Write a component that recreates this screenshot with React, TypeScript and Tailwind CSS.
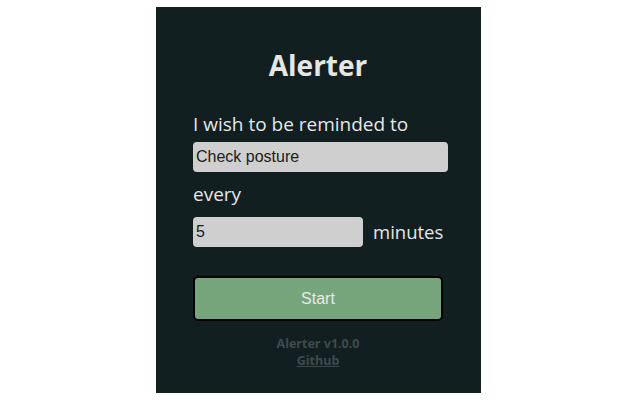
export default function App() {
  return (
    <div className="h-[400px] w-[640px] bg-white pt-[7px] pl-[156px]">
      <div className="flex h-[386px] w-[325px] flex-col bg-[#121f21] pl-[37px] font-['Open_Sans',sans-serif] text-[#e6e6e6]">
        <h1 className="mt-[42px] w-[250px] text-center text-[28px] leading-[32px] font-bold">Alerter</h1>
        <p className="mt-[31px] text-[19px] leading-[24px]">I wish to be reminded to</p>
        <input
          className="mt-[6px] h-[30px] w-[255px] rounded-[4px] bg-[#cfcfcf] px-[3px] font-['Liberation_Sans',sans-serif] text-[16px] text-[#1b1b1b] outline-none"
          defaultValue="Check posture"
        />
        <p className="mt-[10px] text-[19px] leading-[24px]">every</p>
        <div className="mt-[11px] flex items-center gap-[10px]">
          <input
            className="h-[30px] w-[170px] rounded-[4px] bg-[#cfcfcf] px-[3px] font-['Liberation_Sans',sans-serif] text-[16px] text-[#1b1b1b] outline-none"
            defaultValue="5"
          />
          <span className="text-[18.5px] leading-[24px]">minutes</span>
        </div>
        <button className="mt-[29px] h-[45px] w-[250px] rounded-[5px] border-2 border-black bg-[#76a57b] font-['Liberation_Sans',sans-serif] text-[16px] text-[#e8e8e8]">
          Start
        </button>
        <div className="mt-[14px] flex w-[250px] flex-col items-center text-[12.5px] leading-[17px] font-bold text-[#3f4b4b]">
          <span>Alerter v1.0.0</span>
          <a href="#" className="underline">Github</a>
        </div>
      </div>
    </div>
  );
}
